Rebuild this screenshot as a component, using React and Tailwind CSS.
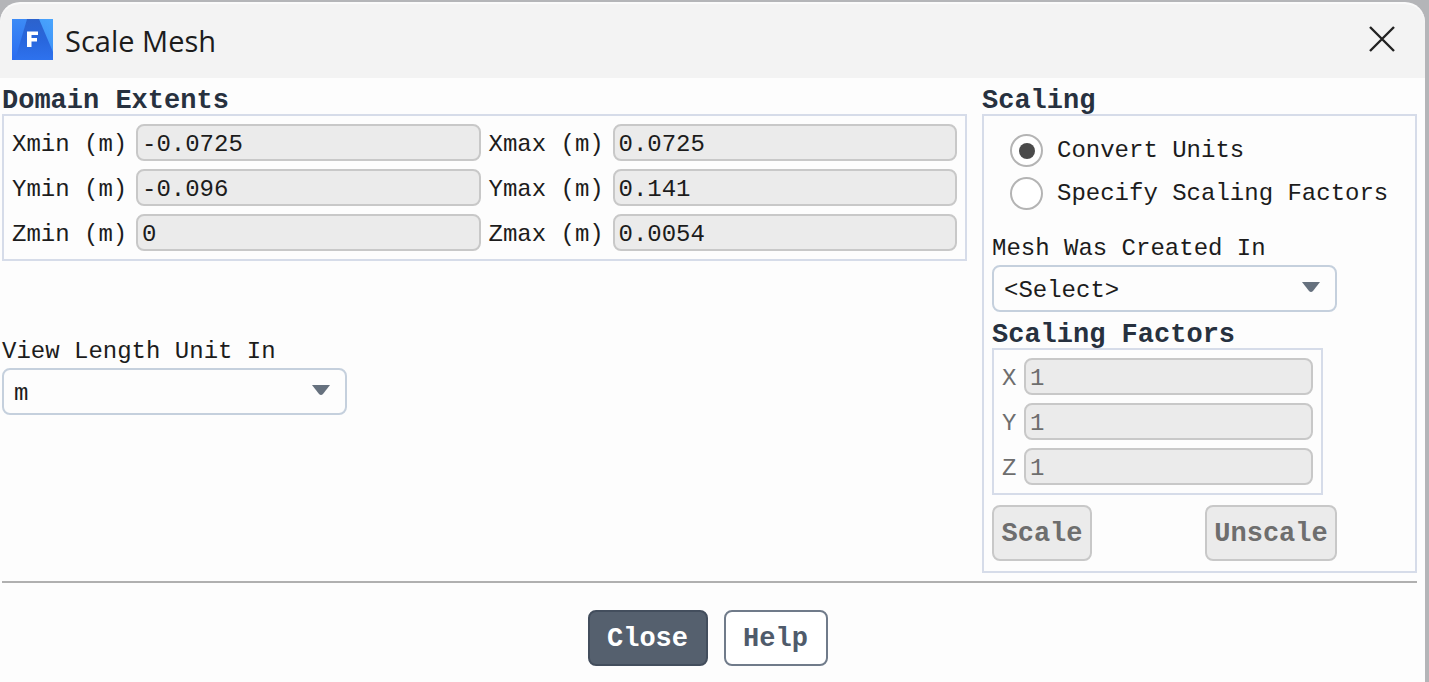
import { useState } from "react"

const EXTENTS = [
    { label: "Xmin (m)", value: "-0.0725" },
    { label: "Xmax (m)", value: "0.0725" },
    { label: "Ymin (m)", value: "-0.096" },
    { label: "Ymax (m)", value: "0.141" },
    { label: "Zmin (m)", value: "0" },
    { label: "Zmax (m)", value: "0.0054" },
]

const MODES = ["Convert Units", "Specify Scaling Factors"]
const UNITS = ["m", "cm", "mm", "in", "ft"]

const AppIcon = () => (
    <svg className="size-[41px] shrink-0" viewBox="0 0 41 41" aria-hidden="true">
        <defs>
            <linearGradient id="iconBase" x1="0" y1="1" x2="1" y2="0">
                <stop offset="0" stopColor="#2f7bf0" />
                <stop offset="1" stopColor="#4aa5fd" />
            </linearGradient>
            <linearGradient id="iconLeft" x1="0" y1="0" x2="0" y2="1">
                <stop offset="0" stopColor="#3c8bf6" />
                <stop offset="1" stopColor="#2a6cf0" />
            </linearGradient>
            <linearGradient id="iconPeak" x1="0" y1="0" x2="0" y2="1">
                <stop offset="0" stopColor="#2c62cc" />
                <stop offset="0.5" stopColor="#2866dc" />
                <stop offset="1" stopColor="#2e72ee" />
            </linearGradient>
        </defs>
        <rect width="41" height="41" fill="url(#iconBase)" />
        <path d="M0 0H15L4 41H0Z" fill="url(#iconLeft)" />
        <path d="M15 0H27L41 33V41H3Z" fill="url(#iconPeak)" />
        <path d="M15 12.5H26V16H19.5V19H25V22.5H19.5V28H15Z" fill="#ffffff" />
    </svg>
)

const Heading = ({ children }) => (
    <h2 className="text-[27px] leading-[26px] font-bold text-[#27313f]">{children}</h2>
)

const Field = ({ id, label, value, labelClass, inputClass, disabled }) => (
    <div className="flex items-center">
        <label htmlFor={id} className={`shrink-0 pt-1 whitespace-nowrap ${labelClass}`}>{label}</label>
        <input id={id}
               type="text"
               className={`h-[37px] min-w-0 flex-1 rounded-lg border-2 border-[#c8c8c8] bg-[#ebebeb] pt-1 outline-none ${inputClass}`}
               defaultValue={value}
               readOnly
               disabled={disabled}
        />
    </div>
)

const Dropdown = ({ id, label, options, value, onChange }) => (
    <div className="w-[345px]">
        <label htmlFor={id} className="block leading-[22px] whitespace-nowrap">{label}</label>
        <div className="relative mt-[5px]">
            <select id={id}
                    className="block h-[47px] w-full appearance-none rounded-lg border-2 border-[#c5d0dd] bg-[#fdfdfd] pt-1 pl-2.5 outline-none"
                    value={value}
                    onChange={(e) => onChange(e.target.value)}
            >
                {options.map((option) => (
                    <option key={option}>{option}</option>
                ))}
            </select>
            <svg className="pointer-events-none absolute top-4 right-4 h-3 w-5" viewBox="0 0 20 12" aria-hidden="true">
                <path d="M1 1H19L12 10Q10 12 8 10Z" fill="#66717e" />
            </svg>
        </div>
    </div>
)

const App = () => {

    const [ mode, setMode ] = useState("Convert Units")
    const [ viewUnit, setViewUnit ] = useState("m")
    const [ meshUnit, setMeshUnit ] = useState("<Select>")

    return (
        <div className="min-h-screen bg-[#b4b5b8] pt-[2px] pr-1">
            <div className="flex min-h-[680px] flex-col rounded-t-[20px] border-t-2 border-[#fafafa] bg-[#fdfdfd] font-['Liberation_Mono',monospace] text-2xl text-[#1c1c1c]">
                <header className="flex h-[74px] items-center justify-between rounded-t-[20px] bg-[#f3f3f3] pr-[29px] pb-1 pl-3">
                    <div className="flex items-center gap-3">
                        <AppIcon />
                        <h1 className="pt-1 font-['Open_Sans',sans-serif] text-[29px] leading-9">Scale Mesh</h1>
                    </div>
                    <button type="button" aria-label="Close window">
                        <svg className="size-7" viewBox="0 0 28 28" fill="none" stroke="#222222" strokeWidth="2.4" aria-hidden="true">
                            <path d="M2 2L26 26M26 2L2 26" />
                        </svg>
                    </button>
                </header>

                <main className="flex gap-[15px] pt-2.5 pr-2 pl-0.5">
                    <div className="min-w-0 flex-1">
                        <section>
                            <Heading>Domain Extents</Heading>
                            <div className="grid grid-cols-2 gap-2 border-2 border-[#d6dce9] p-2">
                                {EXTENTS.map((item) => (
                                    <Field key={item.label}
                                           id={item.label.slice(0, 4)}
                                           label={item.label}
                                           value={item.value}
                                           labelClass="w-[124px]"
                                           inputClass="pl-1"
                                    />
                                ))}
                            </div>
                        </section>
                        <div className="mt-20">
                            <Dropdown id="viewUnit"
                                      label="View Length Unit In"
                                      options={UNITS}
                                      value={viewUnit}
                                      onChange={setViewUnit}
                            />
                        </div>
                    </div>

                    <section className="w-[435px] shrink-0">
                        <Heading>Scaling</Heading>
                        <div className="border-2 border-[#d6dce9] px-2 pt-[18px] pb-2.5">
                            <div className="mb-7 flex flex-col gap-2.5 pl-[18px]">
                                {MODES.map((item) => (
                                    <label key={item} className="flex h-[33px] items-center gap-3.5 whitespace-nowrap">
                                        <input type="radio"
                                               name="mode"
                                               className="grid size-[33px] shrink-0 appearance-none place-items-center rounded-full border-2 border-[#b4b4b4] bg-white before:size-4 before:rounded-full checked:before:bg-[#4a4a4a]"
                                               checked={mode === item}
                                               onChange={() => setMode(item)}
                                        />
                                        {item}
                                    </label>
                                ))}
                            </div>
                            <Dropdown id="meshUnit"
                                      label="Mesh Was Created In"
                                      options={["<Select>", ...UNITS]}
                                      value={meshUnit}
                                      onChange={setMeshUnit}
                            />
                            <div className="mt-2.5 w-[331px]">
                                <Heading>Scaling Factors</Heading>
                                <div className="flex flex-col gap-2 border-2 border-[#d6dce9] p-2 text-[#6e6e6e]">
                                    {["X", "Y", "Z"].map((axis) => (
                                        <Field key={axis}
                                               id={`factor${axis}`}
                                               label={axis}
                                               value="1"
                                               labelClass="w-[22px]"
                                               inputClass="pl-1"
                                               disabled
                                        />
                                    ))}
                                </div>
                            </div>
                            <div className="mt-2.5 flex w-[345px] justify-between text-[27px] font-bold text-[#6e6e6e]">
                                <button type="button" disabled className="h-14 w-[100px] rounded-lg border-2 border-[#c8c8c8] bg-[#ebebeb] pt-1">Scale</button>
                                <button type="button" disabled className="h-14 w-[132px] rounded-lg border-2 border-[#c8c8c8] bg-[#ebebeb] pt-1">Unscale</button>
                            </div>
                        </div>
                    </section>
                </main>

                <hr className="mt-2 mr-2 ml-0.5 border-t-2 border-[#b0b0b0]" />

                <footer className="flex justify-center gap-4 pt-[27px] pr-2.5 pb-4 text-[27px] font-bold">
                    <button type="button" className="h-14 w-[120px] rounded-lg border-2 border-[#434e5d] bg-[#55606e] pt-1 text-white">Close</button>
                    <button type="button" className="h-14 w-[104px] rounded-lg border-2 border-[#707b8a] bg-white pt-1 text-[#4f5b6b]">Help</button>
                </footer>
            </div>
        </div>
    )
}

export default App
